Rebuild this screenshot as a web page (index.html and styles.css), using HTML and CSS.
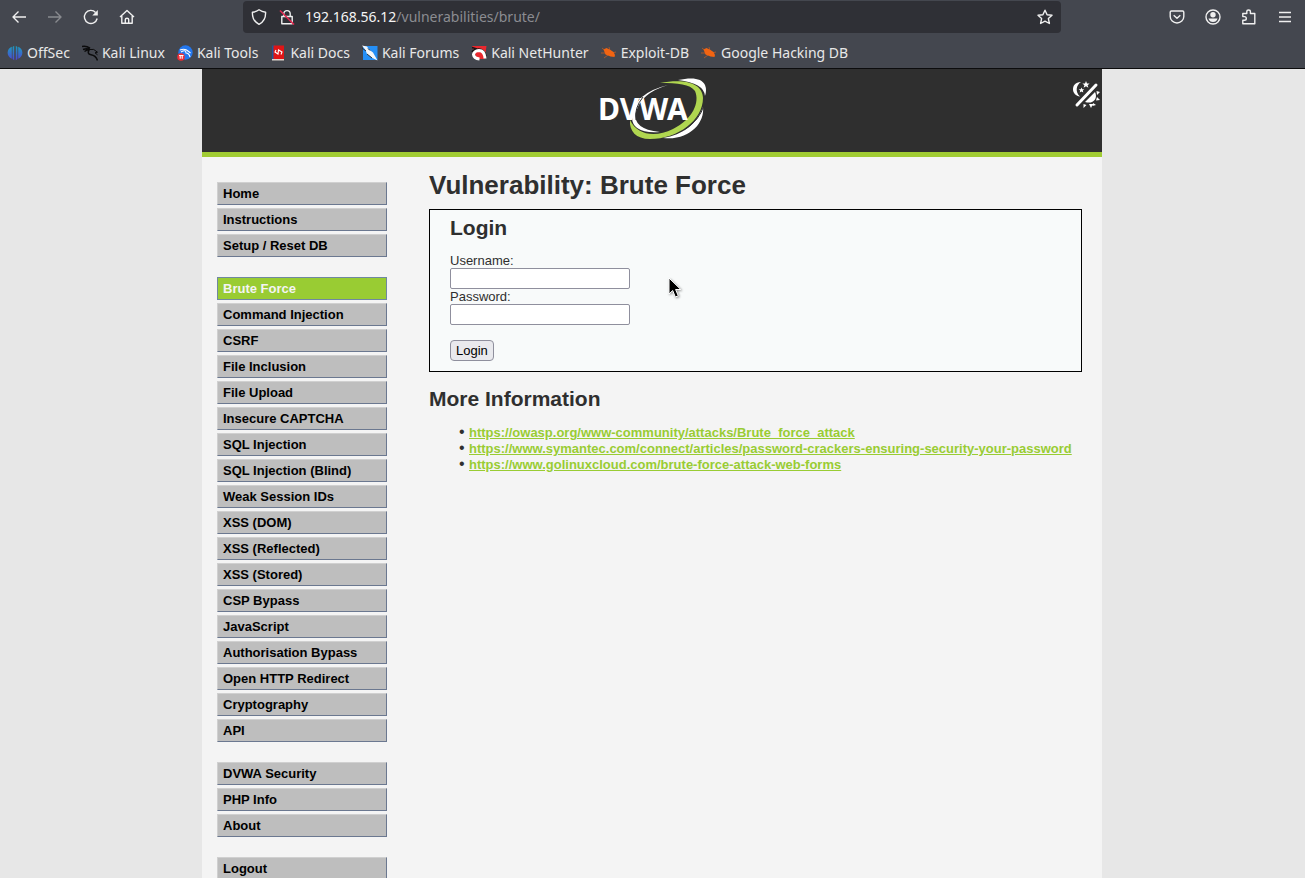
FILE: index.html
```html
<!DOCTYPE html>
<html lang="en">
<head>
<meta charset="utf-8">
<title>Vulnerability: Brute Force</title>
<link rel="stylesheet" href="styles.css">
</head>
<body>
<header class="browser">
  <div class="toolbar">
    <button class="tool" aria-label="Back"><svg width="16" height="16" viewBox="0 0 16 16"><path d="M15 8H2M7.500 2.500 2 8l5.500 5.500"/></svg></button>
    <button class="tool dim" aria-label="Forward"><svg width="16" height="16" viewBox="0 0 16 16"><path d="M1 8h13M8.500 2.500 14 8l-5.500 5.500"/></svg></button>
    <button class="tool" aria-label="Reload"><svg width="16" height="16" viewBox="0 0 16 16"><path d="M14.200 9.500A6.500 6.500 0 1 1 12.600 3.400"/><path class="solid" d="M14.800 1v5.500H9.300z"/></svg></button>
    <button class="tool" aria-label="Home"><svg width="16" height="16" viewBox="0 0 16 16"><path d="M1 8 8 1.500 15 8M2.800 7v7.300h10.400V7M6.300 14V10.500q0-1.200 1.700-1.200t1.700 1.200V14"/></svg></button>
    <div class="address">
      <svg width="16" height="16" viewBox="0 0 16 16"><path d="M8 .8Q11 3 14.600 3.200C14.800 9 12.500 13 8 15.300 3.500 13 1.200 9 1.400 3.200 5 3 8 .8 8 .8Z"/></svg>
      <svg width="16" height="16" viewBox="0 0 16 16"><path d="M2.800 7.500h10.400v7.200H2.800zM4.800 7.500V4.800a3.200 3.200 0 0 1 6.400 0v2.700"/><path class="slash" d="m1 1.500 14 14"/></svg>
      <span class="url"><b>192.168.56.12</b>/vulnerabilities/brute/</span>
      <button class="star" aria-label="Bookmark this page"><svg width="16" height="16" viewBox="0 0 16 16"><path d="m8 1.200 2.100 4.500 4.900.6-3.600 3.300 1 4.900L8 12.100l-4.400 2.400 1-4.900L1 6.300l4.900-.6z"/></svg></button>
    </div>
    <button class="tool" aria-label="Pocket"><svg width="16" height="16" viewBox="0 0 16 16"><path d="M2.400 2h11.200q1.200 0 1.200 1.200V7.500a6.800 6.500 0 0 1-13.600 0V3.200Q1.200 2 2.400 2zM4.700 6.200 8 9.300l3.300-3.100"/></svg></button>
    <button class="tool" aria-label="Account"><svg width="16" height="16" viewBox="0 0 16 16"><circle cx="8" cy="8" r="7"/><circle class="solid" cx="8" cy="5.800" r="2.700"/><path class="solid" d="M3.500 9.500h9Q11.500 13 8 13T3.500 9.500z"/></svg></button>
    <button class="tool" aria-label="Extensions"><svg width="16" height="16" viewBox="0 0 16 16"><path d="M1.800 4.500h4V2.800a1.800 1.800 0 0 1 3.600 0v1.700h4.400v10.300h-12v-3.600h1.700a1.800 1.800 0 0 0 0-3.600H1.800z"/></svg></button>
    <button class="tool" aria-label="Menu"><svg width="16" height="16" viewBox="0 0 16 16"><path d="M2 3.500h12M2 8h12M2 12.500h12"/></svg></button>
  </div>
  <nav class="bookmarks" aria-label="Bookmarks">
    <a href="#"><svg width="16" height="16" viewBox="0 0 16 16"><defs><linearGradient id="off" x1="0" y1="0" x2="0" y2="16" gradientUnits="userSpaceOnUse"><stop stop-color="#18a3bd"/><stop offset="1" stop-color="#5140d5"/></linearGradient></defs><path fill="url(#off)" d="M7.200.8v14.400L5.600 14V2zM8.800.8v14.400l1.600-1.200V2zM4.800 1.800v12Q.8 12 .6 7.800.8 3.500 4.800 1.800zM11.200 1.800v12q4-1.800 4.200-6-.2-4.300-4.200-6z"/></svg>OffSec</a>
    <a href="#"><svg width="16" height="16" viewBox="0 0 16 16"><path class="dragon" d="M0 1.500Q4 .5 8 3.200M1 4.500q4-1.500 7 0M2.500 6.500Q5 4.500 8 4.500M7.500 4q-3 5 1.500 5.800 5 .8 6.500 5.700"/><path class="dragon thin" d="M7 4.500q5-1.500 8.500 2.700L13 7.800l2.500 2"/></svg>Kali Linux</a>
    <a href="#"><svg width="16" height="16" viewBox="0 0 16 16"><circle cx="8.500" cy="7.500" r="7.200" fill="#2377ee"/><path class="swirl" d="M3 5q5-2 8 1l2.500 2M4 7q5-3 5 1 3 0 4 4"/><circle cx="4" cy="12" r="3.800" fill="#ed2d35"/><path class="swirl" d="M2 10.500h4.500M3.200 10.500v3.300M5.200 10.500v3.300"/></svg>Kali Tools</a>
    <a href="#"><svg width="16" height="16" viewBox="0 0 16 16"><path fill="#205697" d="M2 .5h3V14H2z"/><path fill="#df1516" d="M3.500.5H14V14H3.500z"/><path fill="#ded6cf" d="M2 14h12v1.500H2z"/><path class="swirl" d="m6 5-1 2 3 2 .5-4L12 7l-1 2.500"/></svg>Kali Docs</a>
    <a href="#"><svg width="16" height="16" viewBox="0 0 16 16"><path fill="#258ff6" d="M1 1h14.500v14H1z"/><path fill="#f6f7f8" d="M0 .5 5 1.500 7 4.500l4 3 4.500 8-6-3L5 9 3.500 5z"/><path stroke="#26313b" d="M0 3 4 6M5 9l5 4M6 3.500l2 2"/></svg>Kali Forums</a>
    <a href="#"><svg width="16" height="16" viewBox="0 0 16 16"><path fill="#e9282e" d="M1 1h14.500L13.500 14H6z"/><path fill="none" stroke="#171717" stroke-width="1.500" d="M1 2.500 6 4M1 7q2-3 6-3 6-.5 8 7"/><path fill="none" stroke="#fff" stroke-width="3" d="M14 13.500Q13.500 5.500 8 5.500q-5 .5-5.500 4 .5 4 6 4.500"/></svg>Kali NetHunter</a>
    <a href="#"><svg width="16" height="16" viewBox="0 0 16 16"><path class="bug-legs" d="m1 3 5 4M0 8h5M3 13l4-3M15 7l-4 1M8 2l1 4"/><path class="bug" d="m2.500 4.500 3-1.500 4 2 3 2 1.500 3-.5 2-4-.5-5-2z"/></svg>Exploit-DB</a>
    <a href="#"><svg width="16" height="16" viewBox="0 0 16 16"><path class="bug-legs" d="m1 3 5 4M0 8h5M3 13l4-3M15 7l-4 1M8 2l1 4"/><path class="bug" d="m2.500 4.500 3-1.500 4 2 3 2 1.500 3-.5 2-4-.5-5-2z"/></svg>Google Hacking DB</a>
  </nav>
</header>

<div class="viewport">
  <div class="container">
    <header class="banner">
      <svg class="logo" width="110" height="64" viewBox="-2 0 110 64" role="img" aria-label="DVWA">
        <path fill="#fff" d="M78 2C92-1 102 0 105 7q2 5 0 11Q104 5 78 2z"/>
        <path fill="#fff" d="M103 29c2 16-14 34-40 31 20-3 34-14 40-31z"/>
        <path fill="#fff" d="M68 7Q41 15 36 34q-4 17 24 20-28 2-28-15Q34 15 68 7z"/>
        <path fill="#b0d650" d="M60 5C84 0 103 5 103 20 103 42 78 61 50 61 36 61 29 53 30 42 37 57 55 60 73 51 93 41 100 24 95 13 90 6 78 5 60 5z"/>
        <path fill="none" stroke="#2f2f2f" d="M104 27Q100 42 84 52"/>
        <text class="logo-text" x="-2" y="42">DVWA</text>
        <path fill="none" stroke="#2f2f2f" d="M43 19q-9 11-7 23"/>
      </svg>
      <button class="theme" aria-label="Toggle theme"><svg width="28" height="28" viewBox="0 0 28 28"><path fill="#fff" d="M8 1C2 1 0 5 0 8.500S3 15 7 15.500C2 11 3 4 8 1zM13 0l1 2.500h2.600l-2 1.700.8 2.600L13 5.300l-2.400 1.500.8-2.600-2-1.700H12zM8.500 6.500l.8 1.700h2l-1.500 1.300.5 1.900-1.800-1-1.800 1 .5-1.900-1.500-1.300h2zM12 21 22 11q2 4 0 7.500-3 4.500-10 2.500zM23.500 10l3.500 1-3 3zM24 16l3 3-4 .5zM20 22l3 2-3.500 1zM16 23h4l-2 4zM10.500 23l3 1-3 3z"/><path stroke="#fff" stroke-width="3" stroke-linecap="round" d="M4 24 23 4"/></svg></button>
    </header>
    <div class="columns">
      <nav class="menu" aria-label="Main">
        <ul>
          <li><a href="#">Home</a></li><li><a href="#">Instructions</a></li><li><a href="#">Setup / Reset DB</a></li>
        </ul>
        <ul>
          <li><a class="selected" href="#">Brute Force</a></li><li><a href="#">Command Injection</a></li><li><a href="#">CSRF</a></li><li><a href="#">File Inclusion</a></li><li><a href="#">File Upload</a></li><li><a href="#">Insecure CAPTCHA</a></li><li><a href="#">SQL Injection</a></li><li><a href="#">SQL Injection (Blind)</a></li><li><a href="#">Weak Session IDs</a></li><li><a href="#">XSS (DOM)</a></li><li><a href="#">XSS (Reflected)</a></li><li><a href="#">XSS (Stored)</a></li><li><a href="#">CSP Bypass</a></li><li><a href="#">JavaScript</a></li><li><a href="#">Authorisation Bypass</a></li><li><a href="#">Open HTTP Redirect</a></li><li><a href="#">Cryptography</a></li><li><a href="#">API</a></li>
        </ul>
        <ul>
          <li><a href="#">DVWA Security</a></li><li><a href="#">PHP Info</a></li><li><a href="#">About</a></li>
        </ul>
        <ul>
          <li><a href="#">Logout</a></li>
        </ul>
      </nav>
      <main class="content">
        <h1>Vulnerability: Brute Force</h1>
        <form class="login">
          <h2>Login</h2>
          <label for="username">Username:</label>
          <input id="username" type="text">
          <label for="password">Password:</label>
          <input id="password" type="password">
          <button type="button">Login</button>
        </form>
        <h2>More Information</h2>
        <ul class="links">
          <li><a href="#">https://owasp.org/www-community/attacks/Brute_force_attack</a></li>
          <li><a href="#">https://www.symantec.com/connect/articles/password-crackers-ensuring-security-your-password</a></li>
          <li><a href="#">https://www.golinuxcloud.com/brute-force-attack-web-forms</a></li>
        </ul>
      </main>
    </div>
  </div>
</div>
<svg class="pointer" width="14" height="22" viewBox="0 0 14 22" aria-hidden="true"><path d="M1 1v16l3.700-3.500L7.300 20l3-1.200L7.600 12.500h5.200z"/></svg>
</body>
</html>
```
FILE: styles.css
```css
* { box-sizing: border-box; }
body {
  margin: 0;
  height: 100vh;
  display: flex;
  flex-direction: column;
  overflow: hidden;
  background: #e7e7e7;
  color: #2f2f2f;
  font: 13px/15px "Liberation Sans", Arial, sans-serif;
}
button { font: inherit; }

/* Browser chrome */
.browser {
  flex: none;
  background: #44474f;
  border-bottom: 1px solid #0c0c0d;
  color: #e8e8e8;
  font: 14px/20px "Noto Sans", sans-serif;
}
.toolbar {
  display: flex;
  align-items: center;
  gap: 4px;
  padding: 1px 4px 1px 3px;
}
.tool, .star {
  display: flex;
  align-items: center;
  justify-content: center;
  width: 32px;
  height: 32px;
  padding: 0;
  border: 0;
  background: none;
}
.toolbar svg {
  flex: none;
  fill: none;
  stroke: #f0f0f0;
  stroke-width: 1.4;
  stroke-linejoin: round;
}
.toolbar .solid { fill: #f0f0f0; stroke: none; }
.toolbar .slash { stroke: #e22850; stroke-width: 1.6; }
.dim { opacity: 0.4; }
.address {
  flex: 1;
  display: flex;
  align-items: center;
  gap: 12px;
  height: 32px;
  margin: 0 96px;
  padding-left: 8px;
  border-radius: 4px;
  background: #2f3036;
}
.url { flex: 1; margin-left: -2px; color: #8b8c91; }
.url b { color: #f5f5f5; font-weight: 400; }
.bookmarks {
  display: flex;
  gap: 12px;
  padding: 9px 7px 5px;
}
.bookmarks a {
  display: flex;
  align-items: center;
  gap: 4px;
  color: inherit;
  text-decoration: none;
  white-space: nowrap;
}
.dragon { fill: none; stroke: #0b0b0c; stroke-width: 1.5; }
.thin { stroke-width: 1; }
.swirl { fill: none; stroke: #fff; stroke-width: 1.1; }
.bug { fill: #f26412; }
.bug-legs { fill: none; stroke: #a5562c; }

/* Page */
.viewport { flex: 1; min-height: 0; overflow: hidden; padding-right: 1px; }
.container { max-width: 900px; min-height: 100%; margin: 0 auto; background: #f4f4f4; }
.banner {
  display: grid;
  grid-template-columns: 1fr auto 1fr;
  padding: 9px 1px 10px 3px;
  border-bottom: 5px solid #a1cc33;
  background: #2f2f2f;
}
.logo { grid-column: 2; display: block; }
.logo-text {
  fill: #fff;
  font: 700 30px "Noto Sans", sans-serif;
}
.theme {
  justify-self: end;
  align-self: start;
  padding: 3px 0 0;
  border: 0;
  background: none;
}
.theme svg { display: block; }
.columns { display: flex; gap: 42px; padding: 0 20px 0 15px; }
.menu { flex: none; width: 170px; padding-top: 25px; }
.menu ul {
  display: flex;
  flex-direction: column;
  gap: 3px;
  margin: 0 0 20px;
  padding: 0;
  list-style: none;
}
.menu a {
  display: block;
  padding: 3px 5px;
  border: 1px solid;
  border-color: #d0d0d0 #6b7890 #6b7890 #d0d0d0;
  background: #bebebe;
  color: #000;
  font-weight: 700;
  text-decoration: none;
}
.menu .selected { border-color: #7088a0; background: #9c3; color: #f4f4f4; }
.content { flex: 1; min-width: 0; padding-top: 13px; }
h1 { margin: 0 0 9px; font-size: 26px; line-height: 30px; }
h2 { margin: 0; font-size: 21px; line-height: 24px; }
.login {
  display: flex;
  flex-direction: column;
  align-items: flex-start;
  margin-bottom: 15px;
  padding: 6px 20px 10px;
  border: 1px solid #000;
  background: #f8fafa;
}
.login h2 { margin-bottom: 13px; }
.login input {
  width: 180px;
  height: 21px;
  padding: 1px 2px;
  border: 1px solid #8f8f9d;
  border-radius: 2px;
  background: #fff;
  font: inherit;
}
.login button {
  height: 21px;
  margin-top: 15px;
  padding: 0 5px;
  border: 1px solid #8f8f9d;
  border-radius: 4px;
  background: #e9e9ed;
  color: #000;
}
.links { margin: 13px 0; padding-left: 40px; line-height: 15px; }
.links li::marker { content: "•\00a0"; font-size: 16px; }
.links a { color: #9c3; font-weight: 700; }
.pointer {
  position: absolute;
  left: 668px;
  top: 277px;
  fill: #000;
  stroke: #fff;
  filter: drop-shadow(1px 1px 1px rgb(0 0 0 / 40%));
}
```
